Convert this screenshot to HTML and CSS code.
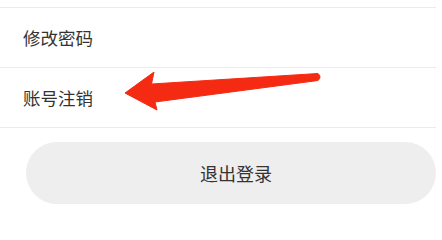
FILE: index.html
```html
<!DOCTYPE html>
<html lang="zh-CN">
<head>
<meta charset="utf-8">
<link rel="stylesheet" href="styles.css">
</head>
<body>
<div class="page">
  <div class="list">
    <div class="item">修改密码</div>
    <div class="item">账号注销</div>
  </div>
  <div class="logout">退出登录</div>
  <svg class="arrow" width="442" height="229" viewBox="0 0 442 229">
    <path d="M125 93 L154 72 L151.5 84 L318 73.5 Q322 77 318 80.5 L155 102 L157 110 Z" fill="#f42b12" stroke="#f42b12" stroke-width="1" stroke-linejoin="round"/>
  </svg>
</div>
</body>
</html>
```
FILE: styles.css
```css
html, body {
  margin: 0;
  padding: 0;
  background: #ffffff;
}
.page {
  position: relative;
  width: 442px;
  height: 229px;
  overflow: hidden;
  font-family: "Noto Sans CJK SC", "Noto Sans", sans-serif;
  color: #333333;
}
.list {
  width: 436px;
  margin-top: 7px;
  border-top: 1px solid #ebebeb;
}
.item {
  height: 59px;
  display: flex;
  align-items: center;
  padding-left: 23px;
  font-size: 17.5px;
  border-bottom: 1px solid #ebebeb;
}
.logout {
  margin: 14px 0 0 26px;
  width: 410px;
  height: 62px;
  border-radius: 31px;
  background: #eeeeee;
  display: flex;
  align-items: center;
  justify-content: center;
  font-size: 18px;
  padding-left: 10px;
  box-sizing: border-box;
}
.arrow {
  position: absolute;
  left: 0;
  top: 0;
}
```
